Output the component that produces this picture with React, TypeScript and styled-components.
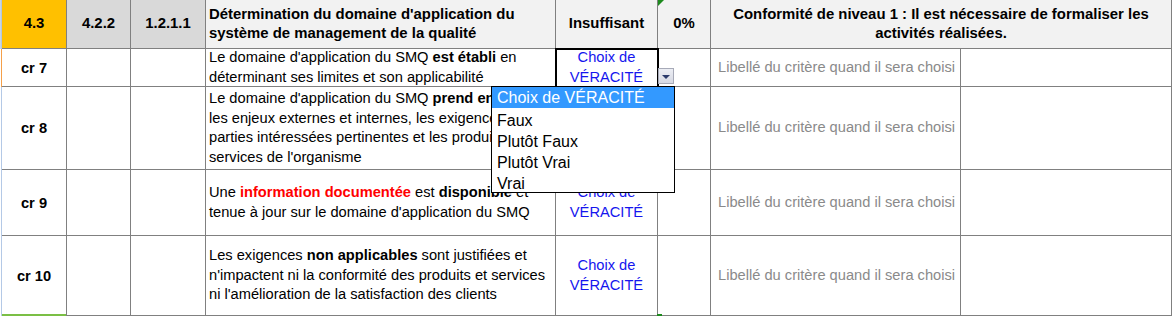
import React from "react";
import styled, { createGlobalStyle, css } from "styled-components";

const GlobalStyle = createGlobalStyle`
  html, body { margin: 0; padding: 0; background: #ffffff; }
  body { font-family: "Liberation Sans", Arial, sans-serif; }
  * { box-sizing: border-box; }
`;

const GRID = "#808080";

const Sheet = styled.div`
  position: relative;
  display: grid;
  grid-template-columns: 2px 65px 64px 75px 350px 102px 53px 250px 211px;
  grid-template-rows: 49px 38px 83px 66px 80px;
  width: 1172px;
  font-size: 14.67px;
  color: #000;
`;

const Edge = styled.div<{ $bg: string; $line: string }>`
  background: ${(p) => p.$bg};
  box-shadow: inset -1px 0 0 ${(p) => p.$line};
`;

const Cell = styled.div`
  border-right: 1px solid ${GRID};
  border-bottom: 1px solid ${GRID};
  display: flex;
  align-items: center;
  overflow: hidden;
  line-height: 19.5px;
`;

const HeadCell = styled(Cell)<{ $bg: string; $span?: number; $left?: boolean }>`
  background: ${(p) => p.$bg};
  font-weight: bold;
  font-size: 14.9px;
  justify-content: ${(p) => (p.$left ? "flex-start" : "center")};
  text-align: ${(p) => (p.$left ? "left" : "center")};
  padding: ${(p) => (p.$left ? "0 0 0 3px" : "0")};
  white-space: nowrap;
  ${(p) =>
    p.$span &&
    css`
      grid-column: span ${p.$span};
    `}
`;

const RefCell = styled(Cell)`
  justify-content: center;
  font-weight: bold;
  padding-top: 2px;
`;

const EmptyCell = styled(Cell)``;

const TextCell = styled(Cell)`
  padding-left: 3px;
  white-space: nowrap;
`;

const Lines = styled.div`
  display: flex;
  flex-direction: column;
`;

const Strong = styled.b<{ $red?: boolean }>`
  color: ${(p) => (p.$red ? "#ff0000" : "inherit")};
`;

const ChoiceCell = styled(Cell)<{ $selected?: boolean }>`
  justify-content: center;
  text-align: center;
  color: #1515ee;
  white-space: nowrap;
  ${(p) =>
    p.$selected &&
    css`
      outline: 2px solid #000;
      outline-offset: -1px;
      position: relative;
      z-index: 1;
    `}
`;

const LabelCell = styled(Cell)`
  padding-left: 7px;
  color: #8a8a8a;
  white-space: nowrap;
`;

const CornerMark = styled.div`
  position: absolute;
  left: 658px;
  top: 0;
  width: 0;
  height: 0;
  border-top: 6px solid #1d8a1d;
  border-right: 6px solid transparent;
  z-index: 2;
`;

const BottomMark = styled.div<{ $left: number; $width: number }>`
  position: absolute;
  left: ${(p) => p.$left}px;
  top: 314px;
  width: ${(p) => p.$width}px;
  height: 3px;
  background: ${(p) => (p.$width > 10 ? "#7bbf45" : "#1d8a1d")};
  z-index: 2;
`;

const DropButton = styled.div`
  position: absolute;
  left: 658px;
  top: 68px;
  width: 16px;
  height: 16px;
  border: 1px solid #a7aab8;
  background: linear-gradient(#eceef4, #d6d9e3);
  display: flex;
  align-items: center;
  justify-content: center;
  z-index: 3;
`;

const DropArrow = styled.div`
  width: 0;
  height: 0;
  border-left: 4px solid transparent;
  border-right: 4px solid transparent;
  border-top: 4px solid #2b3a6b;
  margin-top: 1px;
`;

const DropList = styled.div`
  position: absolute;
  left: 491px;
  top: 86px;
  width: 184px;
  background: #fff;
  border: 1px solid #000;
  z-index: 4;
  display: flex;
  flex-direction: column;
  font-size: 16px;
  font-family: "Liberation Sans", Arial, sans-serif;
`;

const DropItem = styled.div<{ $active?: boolean }>`
  height: ${(p) => (p.$active ? 21 : 21)}px;
  line-height: ${(p) => (p.$active ? 22 : 25)}px;
  padding-left: 5px;
  white-space: nowrap;
  overflow: visible;
  background: ${(p) => (p.$active ? "#3399ff" : "transparent")};
  color: ${(p) => (p.$active ? "#ffffff" : "#000000")};
`;

const Choice = () => (
  <span>
    Choix de
    <br />
    VÉRACITÉ
  </span>
);

const LABEL = "Libellé du critère quand il sera choisi";

export default function App() {
  return (
    <>
      <GlobalStyle />
      <Sheet>
        {/* Header */}
        <Edge $bg="#c9d5e6" $line="#b4c7e0" />
        <HeadCell $bg="#ffc000">4.3</HeadCell>
        <HeadCell $bg="#d9d9d9">4.2.2</HeadCell>
        <HeadCell $bg="#d9d9d9">1.2.1.1</HeadCell>
        <HeadCell $bg="#f2f2f2" $left>
          <Lines>
            <span>Détermination du domaine d'application du</span>
            <span>système de management de la qualité</span>
          </Lines>
        </HeadCell>
        <HeadCell $bg="#f2f2f2">Insuffisant</HeadCell>
        <HeadCell $bg="#f2f2f2">0%</HeadCell>
        <HeadCell $bg="#f2f2f2" $span={2}>
          <span>
            Conformité de niveau 1 : Il est nécessaire de formaliser les
            <br />
            activités réalisées.
          </span>
        </HeadCell>

        {/* cr 7 */}
        <Edge $bg="#ffffff" $line="#f5a04a" />
        <RefCell>cr 7</RefCell>
        <EmptyCell />
        <EmptyCell />
        <TextCell>
          <Lines>
            <span>
              Le domaine d'application du SMQ <Strong>est établi</Strong> en
            </span>
            <span>déterminant ses limites et son applicabilité</span>
          </Lines>
        </TextCell>
        <ChoiceCell $selected>
          <Choice />
        </ChoiceCell>
        <EmptyCell />
        <LabelCell>{LABEL}</LabelCell>
        <EmptyCell />

        {/* cr 8 */}
        <Edge $bg="#ffffff" $line="#b4c9e6" />
        <RefCell>cr 8</RefCell>
        <EmptyCell />
        <EmptyCell />
        <TextCell>
          <Lines>
            <span>
              Le domaine d'application du SMQ <Strong>prend en compte</Strong>
            </span>
            <span>les enjeux externes et internes, les exigences des</span>
            <span>parties intéressées pertinentes et les produits et</span>
            <span>services de l'organisme</span>
          </Lines>
        </TextCell>
        <ChoiceCell>
          <Choice />
        </ChoiceCell>
        <EmptyCell />
        <LabelCell>{LABEL}</LabelCell>
        <EmptyCell />

        {/* cr 9 */}
        <Edge $bg="#ffffff" $line="#b4c9e6" />
        <RefCell>cr 9</RefCell>
        <EmptyCell />
        <EmptyCell />
        <TextCell>
          <Lines>
            <span>
              Une <Strong $red>information documentée</Strong> est{" "}
              <Strong>disponible</Strong> et
            </span>
            <span>tenue à jour sur le domaine d'application du SMQ</span>
          </Lines>
        </TextCell>
        <ChoiceCell>
          <Choice />
        </ChoiceCell>
        <EmptyCell />
        <LabelCell>{LABEL}</LabelCell>
        <EmptyCell />

        {/* cr 10 */}
        <Edge $bg="#ffffff" $line="#b4c9e6" />
        <RefCell>cr 10</RefCell>
        <EmptyCell />
        <EmptyCell />
        <TextCell>
          <Lines>
            <span>
              Les exigences <Strong>non applicables</Strong> sont justifiées et
            </span>
            <span>n'impactent ni la conformité des produits et services</span>
            <span>ni l'amélioration de la satisfaction des clients</span>
          </Lines>
        </TextCell>
        <ChoiceCell>
          <Choice />
        </ChoiceCell>
        <EmptyCell />
        <LabelCell>{LABEL}</LabelCell>
        <EmptyCell />

        <CornerMark />
        <BottomMark $left={2} $width={64} />
        <BottomMark $left={657} $width={5} />
        <DropButton>
          <DropArrow />
        </DropButton>
        <DropList>
          <DropItem $active>Choix de VÉRACITÉ</DropItem>
          <DropItem>Faux</DropItem>
          <DropItem>Plutôt Faux</DropItem>
          <DropItem>Plutôt Vrai</DropItem>
          <DropItem>Vrai</DropItem>
        </DropList>
      </Sheet>
    </>
  );
}
